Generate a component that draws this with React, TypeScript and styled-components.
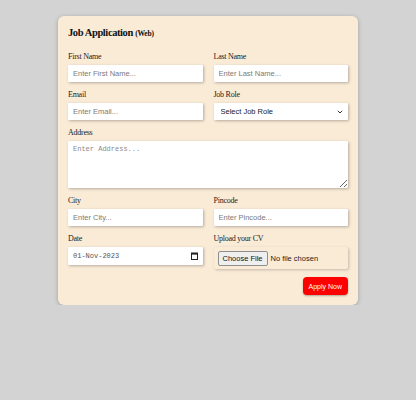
import React from "react";
import styled, { createGlobalStyle } from "styled-components";

const Global = createGlobalStyle`
  html, body { margin: 0; padding: 0; background: #d3d3d3; }
  body { font-family: "Liberation Serif", serif; }
  * { box-sizing: border-box; }
`;

const Card = styled.form`
  width: 300px;
  margin: 16px auto 0;
  background: #faebd7;
  border-radius: 6px;
  box-shadow: 0 1px 4px rgba(0, 0, 0, 0.25);
  padding: 10px 10px 10px;
`;

const Title = styled.h2`
  margin: 0 0 11px;
  font-family: "Liberation Serif", serif;
  font-size: 10.5px;
  line-height: 14px;
  letter-spacing: -0.4px;
  font-weight: bold;
  color: #111;
`;

const Sub = styled.span`
  font-size: 7.5px;
  letter-spacing: -0.2px;
`;

const Grid = styled.div`
  display: grid;
  grid-template-columns: 1fr 1fr;
  column-gap: 11px;
  row-gap: 8px;
`;

const Field = styled.div<{ $full?: boolean }>`
  display: flex;
  flex-direction: column;
  grid-column: ${(p) => (p.$full ? "1 / -1" : "auto")};
`;

const Label = styled.label`
  font-family: "Liberation Serif", serif;
  font-size: 8px;
  line-height: 10px;
  letter-spacing: -0.25px;
  color: #222;
  margin-bottom: 3px;
`;

const inputBase = `
  border: none;
  outline: none;
  background: #fff;
  box-shadow: 1px 1px 3px rgba(0, 0, 0, 0.28);
  border-radius: 1px;
  font-family: "Liberation Sans", Arial, sans-serif;
  font-size: 7.5px;
  color: #222;
`;

const Input = styled.input`
  ${inputBase}
  height: 17px;
  padding: 0 5px;
  &::placeholder { color: #7a7a7a; }
`;

const SelectWrap = styled.div`
  position: relative;
  display: flex;
  flex-direction: column;
`;

const Select = styled.select`
  ${inputBase}
  appearance: none;
  -webkit-appearance: none;
  height: 17px;
  padding: 0 14px 0 7px;
  color: #1a1a1a;
`;

const Chevron = styled.svg`
  position: absolute;
  right: 5px;
  top: 7px;
  pointer-events: none;
`;

const TextArea = styled.textarea`
  ${inputBase}
  height: 47px;
  padding: 4px 5px;
  font-family: "Liberation Mono", monospace;
  font-size: 7px;
  resize: vertical;
  &::placeholder { color: #8a8a8a; }
`;

const DateBox = styled.div`
  ${inputBase}
  height: 18px;
  padding: 0 5px;
  display: flex;
  align-items: center;
  justify-content: space-between;
  font-family: "Liberation Mono", monospace;
  font-size: 7px;
  color: #555;
`;

const FileBox = styled.div`
  display: flex;
  align-items: center;
  height: 22px;
  padding: 0 4px;
  box-shadow: 1px 1px 3px rgba(0, 0, 0, 0.22);
  border-radius: 2px;
  background: #faebd7;
  font-family: "Liberation Sans", Arial, sans-serif;
  font-size: 7.5px;
  color: #222;
  gap: 3px;
`;

const FileButton = styled.span`
  display: inline-block;
  padding: 2px 4px;
  background: #efefef;
  border: 1px solid #8f8f8f;
  border-radius: 2px;
  font-size: 7.5px;
  color: #111;
`;

const Actions = styled.div`
  display: flex;
  justify-content: flex-end;
  margin-top: 8px;
`;

const Button = styled.button`
  height: 18px;
  padding: 0 6px;
  border: none;
  border-radius: 4px;
  background: #ff0000;
  color: #fff;
  font-family: "Liberation Sans", Arial, sans-serif;
  font-size: 7px;
  box-shadow: 0 1px 2px rgba(0, 0, 0, 0.3);
`;

const CalendarIcon = () => (
  <svg width="7" height="8" viewBox="0 0 7 8" fill="none">
    <rect x="0.5" y="1" width="6" height="6.5" stroke="#222" strokeWidth="1" />
    <rect x="0.5" y="1" width="6" height="1.6" fill="#222" />
  </svg>
);

export default function App() {
  return (
    <>
      <Global />
      <Card onSubmit={(e) => e.preventDefault()}>
        <Title>
          Job Application <Sub>(Web)</Sub>
        </Title>
        <Grid>
          <Field>
            <Label>First Name</Label>
            <Input placeholder="Enter First Name..." />
          </Field>
          <Field>
            <Label>Last Name</Label>
            <Input placeholder="Enter Last Name..." />
          </Field>
          <Field>
            <Label>Email</Label>
            <Input placeholder="Enter Email..." />
          </Field>
          <Field>
            <Label>Job Role</Label>
            <SelectWrap>
              <Select defaultValue="">
                <option value="">Select Job Role</option>
                <option value="fe">Frontend Developer</option>
                <option value="be">Backend Developer</option>
              </Select>
              <Chevron width="6" height="4" viewBox="0 0 6 4" fill="none">
                <path d="M0.8 0.8 L3 3 L5.2 0.8" stroke="#333" strokeWidth="1" />
              </Chevron>
            </SelectWrap>
          </Field>
          <Field $full>
            <Label>Address</Label>
            <TextArea placeholder="Enter Address..." />
          </Field>
          <Field>
            <Label>City</Label>
            <Input placeholder="Enter City..." />
          </Field>
          <Field>
            <Label>Pincode</Label>
            <Input placeholder="Enter Pincode..." />
          </Field>
          <Field>
            <Label>Date</Label>
            <DateBox>
              <span>01-Nov-2023</span>
              <CalendarIcon />
            </DateBox>
          </Field>
          <Field>
            <Label>Upload your CV</Label>
            <FileBox>
              <FileButton>Choose File</FileButton>
              <span>No file chosen</span>
            </FileBox>
          </Field>
        </Grid>
        <Actions>
          <Button type="submit">Apply Now</Button>
        </Actions>
      </Card>
    </>
  );
}
